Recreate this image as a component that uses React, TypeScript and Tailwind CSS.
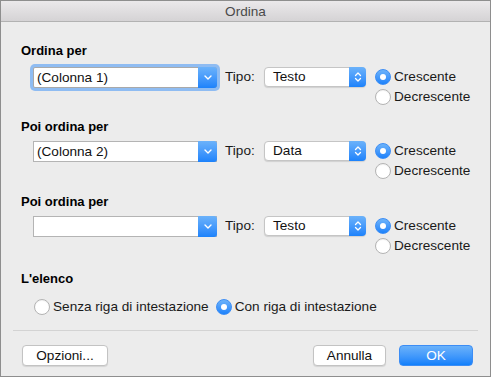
type RadioProps = {
  checked?: boolean;
  label: string;
};

function Radio({ checked, label }: RadioProps) {
  return (
    <div className="flex h-[20px] items-center">
      {checked ? (
        <span className="flex h-[16px] w-[16px] items-center justify-center rounded-full border border-[#3d8ef5] bg-gradient-to-b from-[#6cb3fa] to-[#1a82fb]">
          <span className="h-[6px] w-[6px] rounded-full bg-white" />
        </span>
      ) : (
        <span className="h-[16px] w-[16px] rounded-full border border-[#b3b3b3] bg-white shadow-[inset_0_1px_1px_rgba(0,0,0,0.06)]" />
      )}
      <span className="ml-[3px] text-[13.6px] leading-[16px] text-[#1a1a1a]">{label}</span>
    </div>
  );
}

function ChevronDown() {
  return (
    <svg width="8" height="5" viewBox="0 0 8 5" fill="none">
      <path d="M1 1l3 3 3-3" stroke="white" strokeWidth="1.4" strokeLinecap="round" strokeLinejoin="round" />
    </svg>
  );
}

function Stepper() {
  return (
    <svg width="8" height="12" viewBox="0 0 8 12" fill="none">
      <path d="M1.5 4.5L4 2l2.5 2.5M1.5 7.5L4 10l2.5-2.5" stroke="white" strokeWidth="1.3" strokeLinecap="round" strokeLinejoin="round" />
    </svg>
  );
}

type ComboProps = {
  value: string;
  focused?: boolean;
};

function Combo({ value, focused }: ComboProps) {
  return (
    <div
      className={
        focused
          ? "flex h-[21px] w-[184px] rounded-[2px] border border-[#a9a9a9] bg-white ring-[3px] ring-[#8fbcf2]"
          : "flex h-[21px] w-[184px] border border-[#b4b4b4] bg-white"
      }
    >
      <span className="flex-1 pl-[3px] text-[13.6px] leading-[19px] text-[#111]">{value}</span>
      <span className="-my-[1px] -mr-[1px] flex w-[19px] items-center justify-center rounded-r-[3px] bg-gradient-to-b from-[#6bb2fa] to-[#1b82fb]">
        <ChevronDown />
      </span>
    </div>
  );
}

function Popup({ value }: { value: string }) {
  return (
    <div className="flex h-[20px] w-[102px] rounded-[4px] border border-[#c5c5c5] bg-white shadow-[0_1px_1px_rgba(0,0,0,0.12)]">
      <span className="flex-1 pl-[8px] text-[13.6px] leading-[18px] text-[#111]">{value}</span>
      <span className="-my-[1px] -mr-[1px] flex w-[17px] items-center justify-center rounded-r-[4px] bg-gradient-to-b from-[#6bb2fa] to-[#1b82fb]">
        <Stepper />
      </span>
    </div>
  );
}

type SortRowProps = {
  title: string;
  value: string;
  tipo: string;
  focused?: boolean;
  className: string;
  rowGap: string;
};

function SortRow({ title, value, tipo, focused, className, rowGap }: SortRowProps) {
  return (
    <section className={className}>
      <h3 className="text-[13px] font-bold leading-[16px] text-black">{title}</h3>
      <div className={"ml-[12px] flex items-start " + rowGap}>
        <Combo value={value} focused={focused} />
        <span className="ml-[8px] w-[39px] text-[13.6px] leading-[20px] text-[#1a1a1a]">Tipo:</span>
        <Popup value={tipo} />
        <div className="ml-[9px] flex flex-col">
          <Radio checked label="Crescente" />
          <Radio label="Decrescente" />
        </div>
      </div>
    </section>
  );
}

export default function App() {
  return (
    <div className="h-[378px] w-[492px] bg-white font-['Liberation_Sans',Arial,sans-serif]">
      <div className="flex h-[377px] w-[491px] flex-col border border-[#8e8e8e] bg-[#ececec]">
        <div className="h-[21px] border-b border-[#b2b2b2] bg-gradient-to-b from-[#ebe9eb] to-[#d5d3d5] text-center text-[13.6px] leading-[21px] text-[#4a4a4a]">
          Ordina
        </div>
        <div className="flex flex-col pl-[20px]">
          <SortRow title="Ordina per" value="(Colonna 1)" tipo="Testo" focused className="mt-[21px]" rowGap="mt-[8px]" />
          <SortRow title="Poi ordina per" value="(Colonna 2)" tipo="Data" className="mt-[12px]" rowGap="mt-[6px]" />
          <SortRow title="Poi ordina per" value="" tipo="Testo" className="mt-[13px]" rowGap="mt-[6px]" />
          <section className="mt-[15px]">
            <h3 className="text-[13px] font-bold leading-[16px] text-black">L'elenco</h3>
            <div className="ml-[13px] mt-[10px] flex">
              <Radio label="Senza riga di intestazione" />
              <div className="ml-[7px]">
                <Radio checked label="Con riga di intestazione" />
              </div>
            </div>
          </section>
        </div>
        <div className="mx-[12px] mt-[13px] border-t border-[#d3d3d3]" />
        <div className="flex items-start px-[17px] pt-[14px]">
          <button className="ml-[4px] h-[21px] w-[86px] rounded-[4px] border border-[#c3c3c3] bg-white text-[13.6px] leading-[19px] text-[#111] shadow-[0_1px_1px_rgba(0,0,0,0.1)]">
            Opzioni...
          </button>
          <div className="flex-1" />
          <button className="h-[21px] w-[73px] rounded-[4px] border border-[#c3c3c3] bg-white text-[13.6px] leading-[19px] text-[#111] shadow-[0_1px_1px_rgba(0,0,0,0.1)]">
            Annulla
          </button>
          <button className="ml-[13px] h-[21px] w-[74px] rounded-[4px] border border-[#3c8df5] bg-gradient-to-b from-[#6ab2fa] to-[#0f80fb] text-[13.6px] leading-[19px] text-white">
            OK
          </button>
        </div>
      </div>
    </div>
  );
}
